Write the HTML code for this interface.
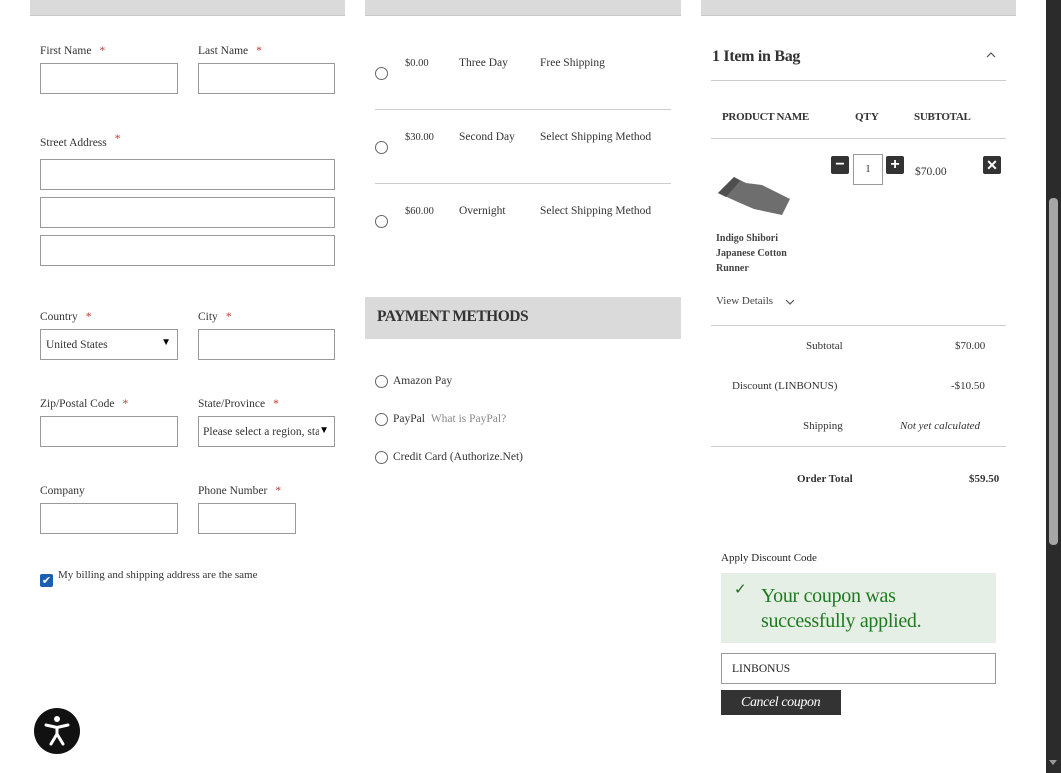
<!DOCTYPE html>
<html><head><meta charset="utf-8"><style>
*{margin:0;padding:0;box-sizing:border-box}
body{width:1061px;height:773px;overflow:hidden;background:#fff;font-family:"Liberation Serif",serif;color:#333;font-size:11.5px;position:relative}
.a{position:absolute;white-space:nowrap}
.bar{position:absolute;top:0;height:16px;background:#dadada;border-bottom:1px solid #c8c8c8}
.in{position:absolute;border:1px solid #999;background:#fff;height:31px}
.st{color:#c0392b;margin-left:8px}
.rad{position:absolute;width:13px;height:13px;border:1px solid #666;border-radius:50%;background:#fff}
.hr{position:absolute;height:1px;background:#ccc}
.sq{position:absolute;width:18px;height:18px;background:#333;border-radius:2px;color:#fff;text-align:center;font:bold 16px/18px "Liberation Sans",sans-serif}
</style></head><body>
<div class="bar" style="left:30px;width:315px"></div>
<div class="bar" style="left:365px;width:316px"></div>
<div class="bar" style="left:701px;width:315px"></div>

<div class="a" style="left:40px;top:45px">First Name<span class="st">*</span></div>
<div class="a" style="left:198px;top:45px">Last Name<span class="st">*</span></div>
<div class="in" style="left:40px;top:63px;width:138px"></div>
<div class="in" style="left:198px;top:63px;width:137px"></div>
<div class="a" style="left:40px;top:137px">Street Address<span class="st" style="position:relative;top:-4px">*</span></div>
<div class="in" style="left:40px;top:159px;width:295px"></div>
<div class="in" style="left:40px;top:197px;width:295px"></div>
<div class="in" style="left:40px;top:235px;width:295px"></div>
<div class="a" style="left:40px;top:311px">Country<span class="st">*</span></div>
<div class="a" style="left:198px;top:311px">City<span class="st">*</span></div>
<div class="in" style="left:40px;top:329px;width:138px;padding:9px 0 0 5px">United States<span style="position:absolute;right:6px;top:7px;font-size:10px;color:#000">▼</span></div>
<div class="in" style="left:198px;top:329px;width:137px"></div>
<div class="a" style="left:40px;top:398px">Zip/Postal Code<span class="st">*</span></div>
<div class="a" style="left:198px;top:398px">State/Province<span class="st">*</span></div>
<div class="in" style="left:40px;top:416px;width:138px"></div>
<div class="in" style="left:198px;top:416px;width:137px;padding:9px 0 0 4px;overflow:hidden">Please select a region, sta<span style="position:absolute;right:5px;top:8px;font-size:10px;color:#000;background:#fff">▼</span></div>
<div class="a" style="left:40px;top:485px">Company</div>
<div class="a" style="left:198px;top:485px">Phone Number<span class="st">*</span></div>
<div class="in" style="left:40px;top:503px;width:138px"></div>
<div class="in" style="left:198px;top:503px;width:98px"></div>
<div class="a" style="left:40px;top:574px;width:13px;height:13px;background:#1a5fb4;border-radius:2px;color:#fff;font:bold 11px/13px 'DejaVu Sans',sans-serif;text-align:center">✔</div>
<div class="a" style="left:58px;top:569px;font-size:11px">My billing and shipping address are the same</div>

<div class="rad" style="left:375px;top:67px"></div>
<div class="a" style="left:405px;top:58px;font-size:10.5px">$0.00</div>
<div class="a" style="left:459px;top:57px">Three Day</div>
<div class="a" style="left:540px;top:57px">Free Shipping</div>
<div class="hr" style="left:375px;top:109px;width:296px"></div>
<div class="rad" style="left:375px;top:141px"></div>
<div class="a" style="left:405px;top:132px;font-size:10.5px">$30.00</div>
<div class="a" style="left:459px;top:131px">Second Day</div>
<div class="a" style="left:540px;top:131px">Select Shipping Method</div>
<div class="hr" style="left:375px;top:183px;width:296px"></div>
<div class="rad" style="left:375px;top:215px"></div>
<div class="a" style="left:405px;top:206px;font-size:10.5px">$60.00</div>
<div class="a" style="left:459px;top:205px">Overnight</div>
<div class="a" style="left:540px;top:205px">Select Shipping Method</div>
<div class="a" style="left:365px;top:297px;width:316px;height:42px;background:#dadada"></div>
<div class="a" style="left:377px;top:308px;font-size:15.5px;font-weight:bold;color:#333;letter-spacing:-0.5px">PAYMENT METHODS</div>
<div class="rad" style="left:375px;top:375px"></div>
<div class="a" style="left:393px;top:375px">Amazon Pay</div>
<div class="rad" style="left:375px;top:413px"></div>
<div class="a" style="left:393px;top:413px">PayPal <span style="color:#888;margin-left:3px">What is PayPal?</span></div>
<div class="rad" style="left:375px;top:451px"></div>
<div class="a" style="left:393px;top:451px">Credit Card (Authorize.Net)</div>

<div class="a" style="left:712px;top:48px;font-size:16px;font-weight:bold;letter-spacing:-0.3px">1 Item in Bag</div>
<svg class="a" style="left:986px;top:51px" width="10" height="7"><path d="M1 6 L5 2 L9 6" fill="none" stroke="#555" stroke-width="1.2"/></svg>
<div class="hr" style="left:711px;top:80px;width:295px"></div>
<div class="a" style="left:722px;top:111px;font-weight:bold;font-size:11px;letter-spacing:-0.3px">PRODUCT NAME</div>
<div class="a" style="left:855px;top:111px;font-weight:bold;font-size:11px">QTY</div>
<div class="a" style="left:914px;top:111px;font-weight:bold;font-size:11px;letter-spacing:-0.3px">SUBTOTAL</div>
<div class="hr" style="left:711px;top:138px;width:295px"></div>
<svg class="a" style="left:716px;top:165px" width="76" height="52"><path d="M2 28 L18 12 L30 18 L46 20 L74 34 L66 50 L38 44 L24 38 Z" fill="#6e6e6e"/><path d="M2 28 L18 12 L24 16 L10 32Z" fill="#4e4e4e"/></svg>
<div class="a" style="left:716px;top:231px;font-size:10px;font-weight:bold;line-height:15px;color:#444">Indigo Shibori<br>Japanese Cotton<br>Runner</div>
<div class="a" style="left:716px;top:295px;font-size:11px;color:#444">View Details</div>
<svg class="a" style="left:785px;top:299px" width="10" height="6"><path d="M1 1 L5 5 L9 1" fill="none" stroke="#555" stroke-width="1.2"/></svg>
<div class="sq" style="left:831px;top:156px">−</div>
<div class="in" style="left:853px;top:154px;width:30px;height:31px;text-align:center;line-height:29px;font-size:11px">1</div>
<div class="sq" style="left:886px;top:156px">+</div>
<div class="a" style="left:915px;top:166px">$70.00</div>
<div class="sq" style="left:983px;top:156px;font-size:14px">✕</div>
<div class="hr" style="left:711px;top:325px;width:295px"></div>
<div class="a" style="left:806px;top:340px;font-size:11px">Subtotal</div>
<div class="a" style="left:955px;top:340px;font-size:11px">$70.00</div>
<div class="a" style="left:732px;top:380px;font-size:11px">Discount (LINBONUS)</div>
<div class="a" style="left:951px;top:380px;font-size:11px">-$10.50</div>
<div class="a" style="left:803px;top:420px;font-size:11px">Shipping</div>
<div class="a" style="left:900px;top:420px;font-size:11px;font-style:italic">Not yet calculated</div>
<div class="hr" style="left:711px;top:446px;width:295px"></div>
<div class="a" style="left:797px;top:473px;font-weight:bold;font-size:11px">Order Total</div>
<div class="a" style="left:969px;top:473px;font-weight:bold;font-size:11px">$59.50</div>
<div class="a" style="left:721px;top:552px;font-size:11px;color:#222">Apply Discount Code</div>
<div class="a" style="left:721px;top:573px;width:275px;height:70px;background:#e5efe5"></div>
<div class="a" style="left:734px;top:580px;color:#1e6b1e;font:bold 15px 'DejaVu Sans',sans-serif">✓</div>
<div class="a" style="left:761px;top:584px;color:#1f7a1f;font-size:20px;line-height:25px;letter-spacing:-0.3px">Your coupon was<br>successfully applied.</div>
<div class="in" style="left:721px;top:653px;width:275px;height:31px;padding:9px 0 0 10px;font-size:11.5px;color:#222">LINBONUS</div>
<div class="a" style="left:721px;top:690px;width:120px;height:25px;background:#333;color:#fff;font-style:italic;font-size:14px;line-height:25px;padding-left:20px;letter-spacing:-0.4px">Cancel coupon</div>

<div class="a" style="left:34px;top:708px;width:46px;height:46px;border-radius:50%;background:#111"></div>
<svg class="a" style="left:34px;top:708px" width="46" height="46"><circle cx="23" cy="11" r="3" fill="#fff"/><path d="M12 17 L23 19.5 L34 17 M23 19.5 L23 26 L17 36 M23 26 L29 36" fill="none" stroke="#fff" stroke-width="3" stroke-linecap="round" stroke-linejoin="round"/></svg>

<div class="a" style="left:1046px;top:0;width:15px;height:773px;background:#2b2b2b"></div>
<div class="a" style="left:1049px;top:198px;width:9px;height:347px;background:#a6a6a6;border-radius:4px"></div>
<div class="a" style="left:1049px;top:760px;width:0;height:0;border-left:4px solid transparent;border-right:4px solid transparent;border-top:5px solid #999"></div>
</body></html>
